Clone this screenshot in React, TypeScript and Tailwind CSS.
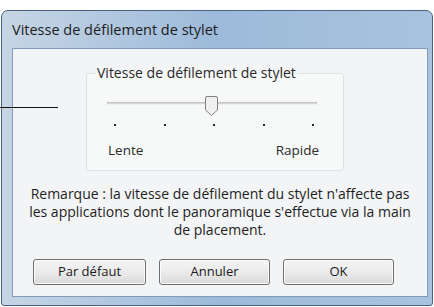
import React from 'react';

const ticks = [13, 63, 112, 162, 211];

const DialogButton: React.FC<{ label: string; width: string }> = ({ label, width }) => (
  <button
    className={`${width} h-[26px] rounded-[3px] border border-[#707070] bg-gradient-to-b from-[#f4f4f4] via-[#ebebeb] to-[#d9d9d9] text-[13px] text-[#1a1a1a] shadow-[inset_0_0_0_1px_#fbfbfb]`}
  >
    {label}
  </button>
);

const App: React.FC = () => {
  return (
    <div
      className="relative w-[434px] h-[307px] bg-white overflow-hidden"
      style={{ fontFamily: '"Open Sans", "Noto Sans", sans-serif' }}
    >
      {/* callout line from the manual */}
      <div className="absolute left-0 top-[107px] w-[58px] h-px bg-[#111]" />

      <div className="ml-[1px] mt-[10px] w-[432px] h-[296px] rounded-t-[7px] rounded-b-[3px] border border-[#46627f] bg-gradient-to-r from-[#c6d5e5] via-[#9dbada] to-[#a8c3df] flex flex-col">
        <div className="h-[37px] pl-[10px] flex items-center text-[14.5px] text-[#1c1c1c]">
          Vitesse de défilement de stylet
        </div>

        <div className="ml-[10px] mr-[4px] h-[249px] border border-[#7f9bb8] bg-[#f3f4f5] flex flex-col">
          <fieldset className="ml-[73px] mt-[16px] w-[258px] h-[106px] border border-[#dfe2e5] rounded-[3px] bg-[#f7f8f8]">
            <legend className="ml-[9px] px-[1px] text-[14px] leading-[16px] text-[#2a2a2a]">
              Vitesse de défilement de stylet
            </legend>

            <svg width="230" height="34" className="ml-[15px] mt-[14px] block" viewBox="0 0 230 34">
              <line x1="5" y1="8" x2="215" y2="8" stroke="#b5b5b5" strokeWidth="1.5" />
              <line x1="5" y1="9" x2="215" y2="9" stroke="#e8e8e8" strokeWidth="1" />
              <path
                d="M105 1.5 h9 a1.5 1.5 0 0 1 1.5 1.5 v12 l-6 5.5 l-6 -5.5 v-12 a1.5 1.5 0 0 1 1.5 -1.5 z"
                fill="#f0f0f0"
                stroke="#808080"
                strokeWidth="1"
              />
              {ticks.map((x) => (
                <rect key={x} x={x - 1} y={29} width="2" height="2" fill="#2a2a2a" />
              ))}
            </svg>

            <div className="mt-[13px] pl-[21px] pr-[24px] flex justify-between text-[13.5px] leading-[16px] text-[#2a2a2a]">
              <span>Lente</span>
              <span>Rapide</span>
            </div>
          </fieldset>

          <p className="mt-[14px] px-[4px] text-center text-[14px] leading-[18px] text-[#1e1e1e]">
            Remarque : la vitesse de défilement du stylet n'affecte pas
            <br />
            les applications dont le panoramique s'effectue via la main
            <br />
            de placement.
          </p>

          <div className="mt-[20px] pl-[20px] flex gap-[13px]">
            <DialogButton label="Par défaut" width="w-[113px]" />
            <DialogButton label="Annuler" width="w-[111px]" />
            <DialogButton label="OK" width="w-[111px]" />
          </div>
        </div>
      </div>
    </div>
  );
};

export default App;
